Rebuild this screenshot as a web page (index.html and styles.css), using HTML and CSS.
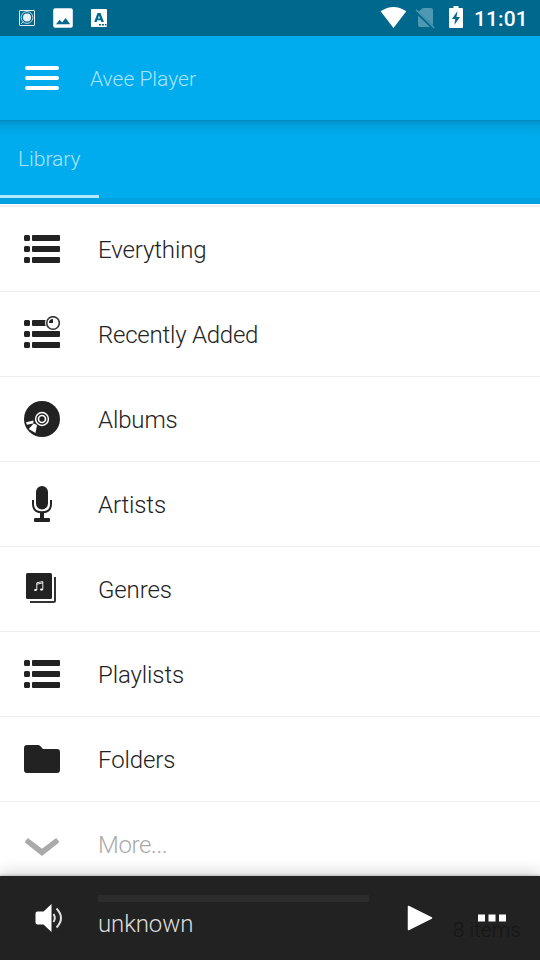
FILE: index.html
```
<!DOCTYPE html>
<html lang="en">
<head>
<meta charset="utf-8">
<title>Avee Player</title>
<link rel="stylesheet" href="styles.css">
</head>
<body>
<svg class="defs" width="0" height="0" aria-hidden="true">
  <symbol id="list" viewBox="0 0 36 36">
    <path d="M1.5 4h3Q6 4 6 5.500v3Q6 10 4.500 10h-3Q0 10 0 8.500v-3Q0 4 1.500 4zM9 4h26q1 0 1 1v4q0 1-1 1H9q-1 0-1-1V5q0-1 1-1zM1.500 15h3Q6 15 6 16.500v3Q6 21 4.500 21h-3Q0 21 0 19.500v-3Q0 15 1.500 15zM9 15h26q1 0 1 1v4q0 1-1 1H9q-1 0-1-1v-4q0-1 1-1zM1.500 26h3Q6 26 6 27.500v3Q6 32 4.500 32h-3Q0 32 0 30.500v-3Q0 26 1.500 26zM9 26h26q1 0 1 1v4q0 1-1 1H9q-1 0-1-1v-4q0-1 1-1z"/>
  </symbol>
</svg>
<div class="screen">
  <header class="status">
    <svg class="status-left" width="90" height="20" viewBox="0 0 90 20">
      <rect x="1.500" y="2.500" width="15" height="15" rx=".5" fill="none" stroke="#e3eff4"/>
      <circle cx="9" cy="9.500" r="5.900" fill="none" stroke="#c4dbe5" stroke-width="1"/>
      <circle cx="9" cy="9.500" r="4" fill="#e8f2f6"/>
      <path d="M3 16l2.500-2.500" stroke="#c4dbe5"/>
      <rect x="35.200" y="0.200" width="19.600" height="19.600" rx="2" fill="#fff"/>
      <path d="M38 16.300l3.700-4.600 2.400 2.900 3.500-4.600 4.600 6.300z" fill="#00678d"/>
      <rect x="73" y="1" width="16" height="18" rx="1" fill="#fff"/>
      <path fill-rule="evenodd" d="M79.500 5h3l3.400 9h-2.600l-.6-1.700h-3.400l-.6 1.700h-2.500zM80 10.500h2L81 7.500z" fill="#00678d"/>
      <path d="M81 16h2v1.500h-2zM84 16h2v1.500h-2zM87 16h1.500v1.500H87z" fill="#00678d"/>
    </svg>
    <svg class="status-right" width="84" height="24" viewBox="0 0 84 24">
      <path d="M.6 5.300Q13.500-3.200 26.300 5.300L13.500 22z" fill="#fff"/>
      <path d="M42.800 2H51q2 0 2 2v15.200L38.400 5.600zM38 9.500L50 21H40q-2 0-2-2z" fill="#4f98b3"/>
      <path d="M36 3.700L54.300 22" stroke="#4f98b3" stroke-width="1.500"/>
      <path d="M73.500 0h5v2H82q1 0 1 1v18q0 1-1 1H70q-1 0-1-1V3q0-1 1-1h3.500z" fill="#fff"/>
      <path d="M77.500 5L72 13h3.300l-1 6L80 11h-3.500z" fill="#00678d"/>
    </svg>
    <span class="clock">11:01</span>
  </header>
  <div class="appbar">
    <svg width="34" height="26" viewBox="0 0 34 26"><path d="M2 3h30M2 13h30M2 23h30" stroke="#fff" stroke-width="4" stroke-linecap="round"/></svg>
    <h1>Avee Player</h1>
  </div>
  <nav class="tabs"><span class="tab">Library</span></nav>
  <ul class="list">
    <li><svg class="icon"><use href="#list"/></svg><span>Everything</span></li>
    <li class="recent"><svg class="icon"><use href="#list"/><circle cx="29" cy="7" r="8" fill="#fff"/><circle cx="29" cy="7" r="6.300" fill="#fff" stroke="#333" stroke-width="1.600"/><path d="M29 3v4h-4q0-4 4-4z"/></svg><span>Recently Added</span></li>
    <li><svg class="icon" viewBox="0 0 36 36"><circle cx="18" cy="18" r="18"/><circle cx="18" cy="18" r="6.400" fill="none" stroke="#fff" stroke-width="1.500"/><circle cx="18" cy="18" r="3.500" fill="none" stroke="#fff" stroke-width="1.700"/><path d="M2 21.300l7.500-1.700-.3 3-6.300 1.100zM4.700 28l5-5.500 3.300 1.500-1.500 8z" fill="#fff"/></svg><span>Albums</span></li>
    <li><svg class="icon" viewBox="0 0 36 36"><rect x="12" y="0" width="12" height="23.500" rx="6"/><path d="M9 14v4q0 8.300 9 8.300t9-8.300v-4" fill="none" stroke="#222" stroke-width="2"/><path d="M16 26h4v6h5q1 0 1 1v2q0 1-1 1H11q-1 0-1-1v-2q0-1 1-1h5z"/></svg><span>Artists</span></li>
    <li><svg class="icon" viewBox="0 0 36 36"><rect x="2" y="2" width="26" height="26" rx="1.500"/><path d="M6 31h23.500q1.500 0 1.500-1.500V6" fill="none" stroke="#333" stroke-width="2"/><path d="M12.800 19v-7.200l6-1.300v8.200M12.800 13.200l6-1.300" fill="none" stroke="#fff" stroke-width=".9"/><ellipse cx="11.500" cy="19" rx="1.500" ry="1.100" fill="#fff"/><ellipse cx="17.500" cy="18.600" rx="1.500" ry="1.100" fill="#fff"/></svg><span>Genres</span></li>
    <li><svg class="icon"><use href="#list"/></svg><span>Playlists</span></li>
    <li><svg class="icon" viewBox="0 0 36 36"><path d="M3 4h11q1.200 0 2 .8L19 8h14q3 0 3 3v18q0 3-3 3H3q-3 0-3-3V7q0-3 3-3z"/></svg><span>Folders</span></li>
    <li class="more"><svg class="icon" viewBox="0 -.8 36 36"><path d="M4.500 11.700L18 22 31.500 11.700q.7-.5 1.200 0l2.200 3q.5.700-.2 1.300L18 29.200 1.300 16q-.7-.6-.2-1.300l2.200-3q.5-.5 1.200 0z"/></svg><span>More...</span></li>
  </ul>
  <footer class="player">
    <svg class="volume" width="28" height="28" viewBox="0 0 28 28"><path d="M2.500 7.500H8.500L16.500 0v28l-8-7.500H2.500Q.5 20.500.5 18.500v-9Q.5 7.500 2.500 7.500z" fill="#fff"/><path d="M18.500 10q2.600 4 0 8M21.500 4.500q9 9.500 0 19" fill="none" stroke="#ddd" stroke-width="2"/></svg>
    <div class="track"><div class="seek"></div><span>unknown</span></div>
    <svg class="play" width="26" height="26" viewBox="0 0 26 26"><path d="M1.500 1.500v23L24.500 13z" fill="#fff" stroke="#fff" stroke-width="1.500" stroke-linejoin="round"/></svg>
    <svg class="dots" width="29" height="8" viewBox="0 0 29 8"><path d="M0 .5h7v7H0zM10.500.5h7v7h-7zM21 .5h7v7h-7z" fill="#fff"/></svg>
    <span class="count">8 items</span>
  </footer>
</div>
</body>
</html>
```
FILE: styles.css
```
* { box-sizing: border-box; }
body { margin: 0; font-family: Roboto, "Liberation Sans", sans-serif; font-weight: 300; }
svg { display: block; flex: none; }
.defs { position: absolute; }
.screen { width: 540px; height: 960px; overflow: hidden; display: flex; flex-direction: column; background: #fff; }
.status { height: 36px; flex: none; background: #00678d; display: flex; align-items: center; padding-left: 18px; color: #fff; }
.status-right { margin-left: 272px; margin-top: -1px; }
.clock { margin-left: 10px; font-size: 21px; font-weight: 500; line-height: 36px; letter-spacing: .1px; padding-top: 2px; }
.appbar { height: 84px; flex: none; background: #00acee; display: flex; align-items: center; padding-left: 25px; gap: 31px; }
.appbar h1 { margin: 2px 0 0; font-size: 21px; font-weight: 300; color: #a9e4fa; }
.tabs { height: 84px; flex: none; background: linear-gradient(#0088bc, #009bd7 3px, #00a4e3 8px, #00acee 18px, #00acee 78px, #00a1e0 78px); }
.tab { display: block; width: 99px; height: 78px; padding-left: 18px; line-height: 78px; font-size: 21px; color: #a9e4fa; border-bottom: 3px solid #b3e7fa; }
.list { list-style: none; margin: 1px 0 0; padding: 0; border-top: 2px solid #f0f0f0; height: 671px; overflow: hidden; flex: none; }
.list li { height: 85px; display: flex; align-items: center; gap: 38px; padding-left: 24px; border-bottom: 1px solid #efefef; font-size: 24px; letter-spacing: -.12px; color: #222; }
.list .recent { letter-spacing: -.23px; }
.list span { padding-top: 2px; }
.icon { width: 36px; height: 36px; fill: #222; }
.list .more { color: #aaa; letter-spacing: -.35px; }
.more .icon { fill: #aaa; }
.player { position: relative; height: 84px; flex: none; background: #222; display: flex; align-items: center; padding-left: 35px; box-shadow: 0 -1px 2px rgba(0,0,0,.18), 0 -4px 14px rgba(0,0,0,.16); }
.track { width: 271px; margin-left: 35px; align-self: stretch; padding-top: 19px; font-size: 24px; line-height: 28px; letter-spacing: -.12px; color: #ddd; }
.seek { height: 7px; background: #2c2c2c; margin-bottom: 8px; }
.play { margin-left: 38px; }
.dots { margin-left: 45px; }
.count { position: absolute; right: 19px; top: 41px; font-size: 21px; line-height: 26px; color: #161616; }
```
